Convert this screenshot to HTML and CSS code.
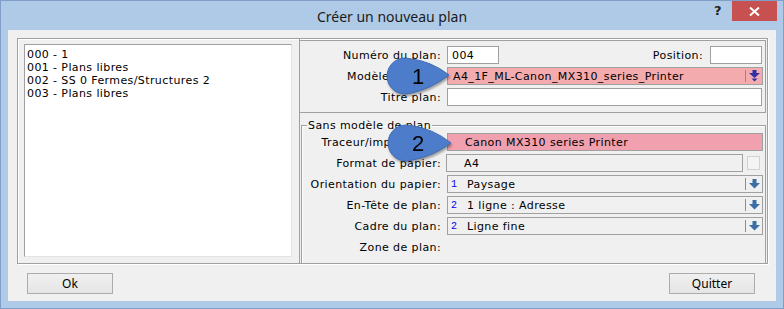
FILE: index.html
```html
<!DOCTYPE html>
<html lang="fr">
<head>
  <meta charset="UTF-8" />
  <title>Créer un nouveau plan</title>
  <link rel="stylesheet" href="styles.css">
</head>
<body>
  <div class="window">
    <div class="titlebar">
      <span></span>
      <span class="title">Créer un nouveau plan</span>
      <div class="caption-btns">
        <span class="help">?</span>
        <span class="close">
          <svg width="11" height="9" viewBox="0 0 11 9"><path d="M1 0.5 L10 8.5 M10 0.5 L1 8.5" stroke="#fff" stroke-width="2"/></svg>
        </span>
      </div>
    </div>

    <div class="client">
      <div class="frame">
        <div class="left">
          <ul class="listbox">
            <li>000 - 1</li>
            <li>001 - Plans libres</li>
            <li>002 - SS 0 Fermes/Structures 2</li>
            <li>003 - Plans libres</li>
          </ul>
        </div>

        <div class="right">
          <div class="topbox">
            <div class="row">
              <label class="lbl">Numéro du plan:</label>
              <div class="field-wrap">
                <input class="input short" type="text" value="004" />
                <span class="spacer"></span>
                <label class="pos-lbl">Position:</label>
                <input class="input short" type="text" value="" />
              </div>
            </div>
            <div class="row">
              <label class="lbl">Modèle de plan:</label>
              <div class="combo pink">
                <span class="combo-text first">A4_1F_ML-Canon_MX310_series_Printer</span>
                <span class="combo-btn">
                  <svg width="11" height="12" viewBox="0 0 11 12"><rect x="3.5" y="0" width="4" height="3" fill="#2f2fa8"/><polygon points="0,3 11,3 5.5,8" fill="#2f2fa8"/><polygon points="2.5,8.5 8.5,8.5 5.5,11.5" fill="#2f2fa8"/></svg>
                </span>
              </div>
            </div>
            <div class="row">
              <label class="lbl">Titre plan:</label>
              <input class="input wide" type="text" value="" />
            </div>
          </div>

          <fieldset class="group">
            <legend>Sans modèle de plan</legend>
            <div class="row">
              <label class="lbl">Traceur/imprimante:</label>
              <div class="combo rose">
                <span class="combo-text plain">Canon MX310 series Printer</span>
              </div>
            </div>
            <div class="row">
              <label class="lbl">Format de papier:</label>
              <div class="format">
                <span class="combo-text plain">A4</span>
              </div>
              <span class="check"></span>
            </div>
            <div class="row">
              <label class="lbl">Orientation du papier:</label>
              <div class="combo">
                <span class="idx">1</span>
                <span class="combo-text">Paysage</span>
                <span class="combo-btn">
                  <svg width="11" height="11" viewBox="0 0 11 11"><rect x="3.5" y="0" width="4" height="4" fill="#3b6ea6"/><polygon points="0,4 11,4 5.5,9.5" fill="#3b6ea6"/></svg>
                </span>
              </div>
            </div>
            <div class="row">
              <label class="lbl">En-Tête de plan:</label>
              <div class="combo">
                <span class="idx">2</span>
                <span class="combo-text">1 ligne : Adresse</span>
                <span class="combo-btn">
                  <svg width="11" height="11" viewBox="0 0 11 11"><rect x="3.5" y="0" width="4" height="4" fill="#3b6ea6"/><polygon points="0,4 11,4 5.5,9.5" fill="#3b6ea6"/></svg>
                </span>
              </div>
            </div>
            <div class="row">
              <label class="lbl">Cadre du plan:</label>
              <div class="combo">
                <span class="idx">2</span>
                <span class="combo-text">Ligne fine</span>
                <span class="combo-btn">
                  <svg width="11" height="11" viewBox="0 0 11 11"><rect x="3.5" y="0" width="4" height="4" fill="#3b6ea6"/><polygon points="0,4 11,4 5.5,9.5" fill="#3b6ea6"/></svg>
                </span>
              </div>
            </div>
            <div class="row">
              <label class="lbl">Zone de plan:</label>
            </div>
          </fieldset>
        </div>
      </div>

      <div class="buttons">
        <button class="btn">Ok</button>
        <button class="btn">Quitter</button>
      </div>
    </div>

    <!-- numbered callouts over the form -->
    <svg class="callout c1" width="68" height="42" viewBox="0 0 68 42">
      <path d="M64 19 Q46 5 25 2.7 A18 18 0 1 0 25 37.3 Q46 33 64 19 Z" fill="#4d7cca" stroke="#3f6bb4" stroke-width="1"/>
      <text x="27" y="28" class="callout-num">1</text>
    </svg>
    <svg class="callout c2" width="68" height="42" viewBox="0 0 68 42">
      <path d="M65 20 Q46 5 25 2.7 A18 18 0 1 0 25 37.3 Q46 34 65 20 Z" fill="#4d7cca" stroke="#3f6bb4" stroke-width="1"/>
      <text x="26" y="28" class="callout-num">2</text>
    </svg>
  </div>
</body>
</html>
```

FILE: styles.css
```css
* {
  box-sizing: border-box;
  margin: 0;
  padding: 0;
}

body {
  width: 784px;
  height: 309px;
  overflow: hidden;
  font-family: "DejaVu Sans", Verdana, sans-serif;
  font-size: 11px;
  letter-spacing: 0.4px;
  color: #000;
}

.window {
  position: relative;
  width: 784px;
  height: 309px;
  background: #aecae6;
  border: 1px solid #7f9fc9;
}

/* title bar */
.titlebar {
  height: 29px;
  display: grid;
  grid-template-columns: 1fr auto 1fr;
  align-items: center;
}

.title {
  font-family: "Noto Sans", "Open Sans", sans-serif;
  font-size: 14px;
  letter-spacing: 0;
  color: #1b1b1b;
  padding-top: 1px;
}

.caption-btns {
  display: flex;
  justify-content: flex-end;
  align-self: start;
  align-items: center;
  padding-right: 6px;
}

.help {
  font-family: "DejaVu Sans", sans-serif;
  font-weight: bold;
  font-size: 13px;
  color: #222;
  margin-right: 10px;
  margin-top: -2px;
}

.close {
  width: 45px;
  height: 20px;
  background: #c75050;
  display: flex;
  align-items: center;
  justify-content: center;
}

/* client area */
.client {
  margin: 0 7px;
  height: 271px;
  background: #f0f0f0;
  padding: 8px 8px 0 9px;
}

.frame {
  height: 226px;
  border: 1px solid #a0a0a0;
  box-shadow: 1px 1px 0 #fff, inset 1px 1px 0 #fff;
  display: flex;
}

.left {
  width: 282px;
  border-right: 1px solid #a0a0a0;
  padding: 5px 7px 5px 6px;
}

.listbox {
  list-style: none;
  width: 268px;
  height: 213px;
  background: #fff;
  border: 1px solid #a0a0a0;
  border-right-color: #e3e3e3;
  border-bottom-color: #e3e3e3;
  padding: 3px 2px;
}

.listbox li {
  line-height: 13px;
}

.right {
  flex: 1;
  padding: 1px 1px 0 0;
  display: flex;
  flex-direction: column;
}

.topbox {
  height: 73px;
  border: 1px solid #a0a0a0;
  border-left: none;
  padding: 5px 0 0 0;
  display: flex;
  flex-direction: column;
  gap: 3px;
}

.row {
  display: flex;
  align-items: center;
  height: 18px;
}

.lbl {
  width: 141px;
  text-align: right;
  margin-right: 6px;
  white-space: nowrap;
}

.field-wrap {
  width: 315px;
  display: flex;
  align-items: center;
}

.spacer {
  flex: 1;
}

.pos-lbl {
  margin-right: 7px;
}

.input {
  height: 18px;
  border: 1px solid #a0a0a0;
  background: #fff;
  font-family: "DejaVu Sans", sans-serif;
  font-size: 11px;
  letter-spacing: 0.4px;
  padding: 0 4px;
  outline: none;
}

.input.short {
  width: 52px;
}

.input.wide {
  width: 315px;
}

.combo {
  width: 316px;
  height: 18px;
  border: 1px solid #a0a0a0;
  background: #f0f0f0;
  display: flex;
  align-items: center;
  position: relative;
}

.combo.pink {
  background: #f4abad;
}

.combo.rose {
  background: #f0a0ae;
}

.idx {
  font-family: "Liberation Mono", monospace;
  font-size: 10px;
  letter-spacing: 0;
  color: #0000f0;
  width: 19px;
  padding-left: 3px;
}

.combo-text {
  flex: 1;
  white-space: nowrap;
}

.combo-text.first {
  padding-left: 5px;
}

.combo-text.plain {
  padding-left: 17px;
}

.combo-btn {
  width: 17px;
  height: 12px;
  border-left: 1px solid #8c8c8c;
  display: flex;
  align-items: center;
  justify-content: center;
}

.format {
  width: 297px;
  height: 18px;
  border: 1px solid #a0a0a0;
  background: #f0f0f0;
  display: flex;
  align-items: center;
  margin-left: -1px;
}

.check {
  width: 13px;
  height: 14px;
  margin-left: 4px;
  border: 1px solid #d2d2d2;
  background: #f4f4f4;
}

/* second group */
.group {
  flex: 1;
  margin: 6px 0 0 1px;
  border: 1px solid #a0a0a0;
  border-bottom: none;
  box-shadow: inset 1px 1px 0 #fff;
  padding: 1px 0 0 0;
  display: flex;
  flex-direction: column;
  gap: 3px;
}

.group legend {
  margin-left: 5px;
  padding: 0 1px;
  line-height: 13px;
}

.group .lbl {
  width: 139px;
}

/* bottom buttons */
.buttons {
  display: flex;
  justify-content: space-between;
  padding: 9px 13px 0 10px;
}

.btn {
  width: 86px;
  height: 21px;
  border: 1px solid #acacac;
  background: linear-gradient(#f0f0f0, #e5e5e5);
  font-family: "Noto Sans", "Open Sans", sans-serif;
  font-size: 12px;
  letter-spacing: 0;
  color: #000;
}

/* callouts */
.callout {
  position: absolute;
  filter: drop-shadow(1px 2px 1px rgba(0, 0, 0, 0.35));
}

.callout.c1 {
  left: 384px;
  top: 55px;
}

.callout.c2 {
  left: 385px;
  top: 122px;
}

.callout-num {
  font-family: "Liberation Sans", Arial, sans-serif;
  font-size: 22px;
  letter-spacing: 0;
  fill: #000;
}
```
